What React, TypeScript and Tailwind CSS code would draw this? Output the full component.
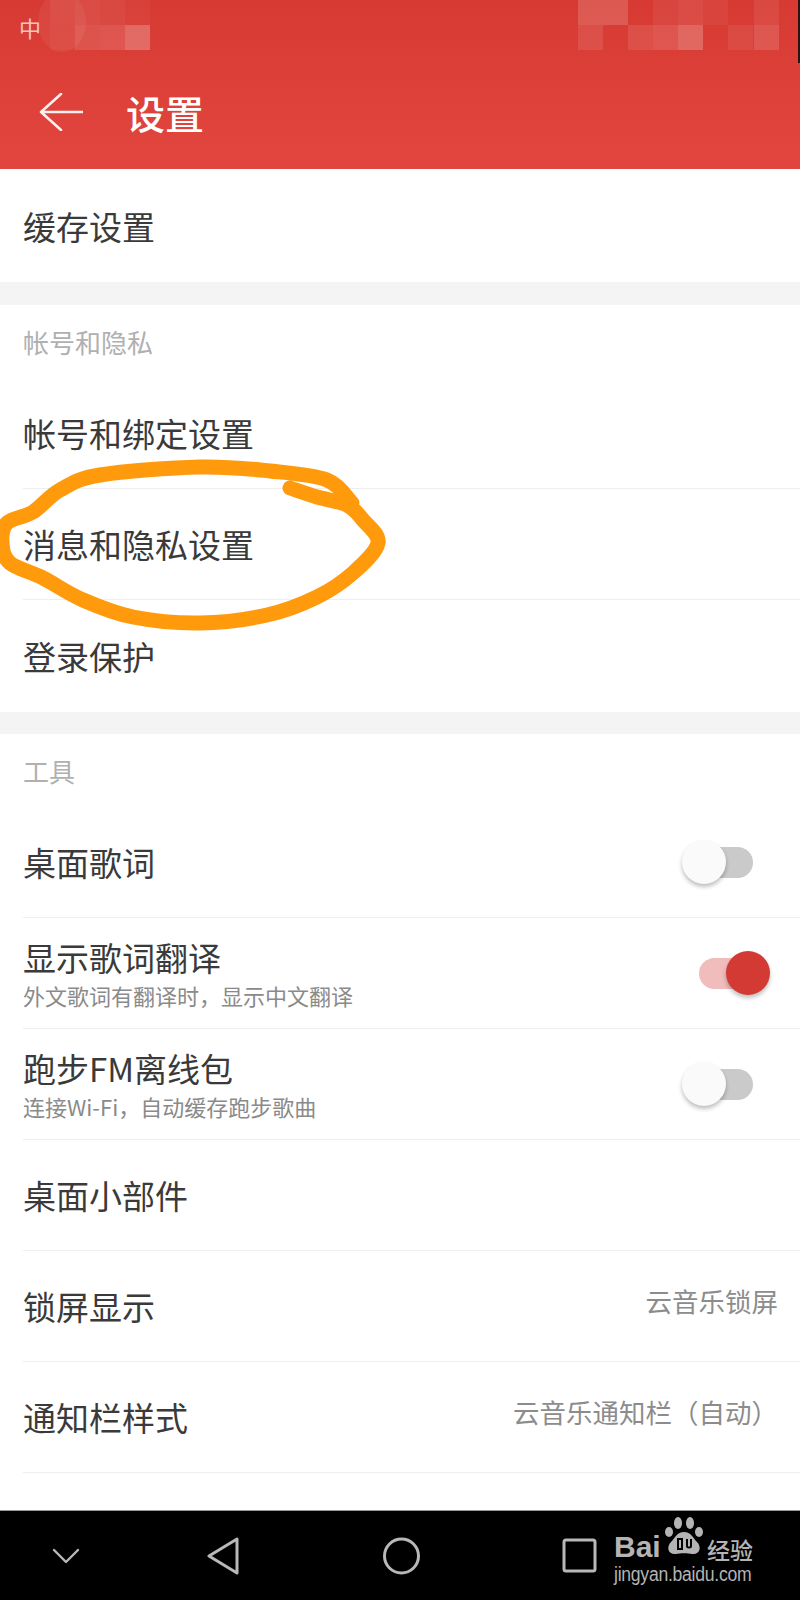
const font = "font-['Noto_Sans_CJK_SC','Noto_Sans',sans-serif]";

const mosaicLeft = [
  [50, 0, 0.05], [75, 0, 0.09], [100, 0, 0.07], [125, 0, 0.04],
  [50, 25, 0.04], [75, 25, 0.12], [100, 25, 0.13], [125, 25, 0.24],
];
const mosaicRight = [
  [578, 0, 0.16], [603, 0, 0.16], [653, 0, 0.06], [678, 0, 0.09], [703, 0, 0.05], [754, 0, 0.08],
  [578, 25, 0.1], [628, 25, 0.1], [653, 25, 0.13], [678, 25, 0.22], [728, 25, 0.07], [754, 25, 0.14],
];

// hand-drawn orange ring, traced from the screenshot
const ring = [
  [290, 488], [317, 497], [347, 505], [363, 520], [378, 543], [353, 573], [317, 597], [267, 615],
  [200, 623], [133, 617], [83, 600], [43, 578], [10, 563], [2, 543], [7, 523], [33, 512],
  [60, 490], [100, 475], [200, 467], [270, 471], [327, 480], [352, 503],
];

function smoothPath(pts: number[][]) {
  let d = `M${pts[0][0]} ${pts[0][1]}`;
  for (let i = 0; i < pts.length - 1; i++) {
    const p0 = pts[Math.max(i - 1, 0)];
    const p1 = pts[i];
    const p2 = pts[i + 1];
    const p3 = pts[Math.min(i + 2, pts.length - 1)];
    d += ` C${p1[0] + (p2[0] - p0[0]) / 6} ${p1[1] + (p2[1] - p0[1]) / 6} ${p2[0] - (p3[0] - p1[0]) / 6} ${p2[1] - (p3[1] - p1[1]) / 6} ${p2[0]} ${p2[1]}`;
  }
  return d;
}

function Toggle({ on }: { on?: boolean }) {
  return (
    <div className="relative w-[88px] h-[44px] shrink-0">
      <div className={`absolute left-[17px] top-[7px] w-[54px] h-[31px] rounded-full ${on ? "bg-[#f0bcbc]" : "bg-[#cacaca]"}`} />
      <div
        className={`absolute top-0 w-[44px] h-[44px] rounded-full shadow-[0_3px_4px_rgba(0,0,0,0.25)] ${
          on ? "left-[44px] bg-[#d23a33]" : "left-0 bg-[#fafafa]"
        }`}
      />
    </div>
  );
}

function Row({
  title,
  sub,
  right,
  toggle,
  last,
  h = "h-[111px]",
}: {
  title: string;
  sub?: string;
  right?: string;
  toggle?: "on" | "off";
  last?: boolean;
  h?: string;
}) {
  return (
    <div className={`ml-[23px] flex items-center justify-between ${h} ${last ? "" : "border-b border-[#eeeeee]"}`}>
      <div className="flex flex-col">
        <div className="text-[33px] leading-[40px] text-[#3a3a3a]">{title}</div>
        {sub && <div className="mt-[4px] text-[22px] leading-[28px] text-[#8a8a8a]">{sub}</div>}
      </div>
      {toggle && <div className="mr-[30px]"><Toggle on={toggle === "on"} /></div>}
      {right && <div className="mr-[22px] mb-[10px] text-[26.5px] text-[#8c8c8c]">{right}</div>}
    </div>
  );
}

function SectionLabel({ text }: { text: string }) {
  return <div className="ml-[23px] h-[72px] flex items-center text-[26px] text-[#b0b0b0]">{text}</div>;
}

export default function App() {
  return (
    <div className={`relative w-[800px] h-[1600px] overflow-hidden bg-white flex flex-col ${font}`}>
      <header className="relative h-[169px] shrink-0 bg-gradient-to-b from-[#d63a32] to-[#e2463e]">
        <svg className="absolute left-0 top-0" width="800" height="64">
          {[...mosaicLeft, ...mosaicRight].map(([x, y, o]) => (
            <rect key={`${x}-${y}`} x={x} y={y} width="25" height="25" fill="white" opacity={o} />
          ))}
          <ellipse cx="62" cy="22" rx="24" ry="30" fill="white" opacity="0.06" />
          <rect x="798" y="0" width="2" height="63" fill="#2a1412" />
        </svg>
        <div className="absolute left-[19px] top-[12px] text-[22px] leading-[30px] text-[#f6c4c0]">中</div>
        <div className="absolute left-[39px] top-[92px] flex items-center">
          <svg width="44" height="38" viewBox="0 0 44 38" fill="none" stroke="#fdf0ee" strokeWidth="2.6" strokeLinecap="round" strokeLinejoin="round">
            <path d="M22 1 L2 19 L22 37 M2 19 H44" />
          </svg>
          <div className="ml-[43px] text-[39px] leading-[40px] font-medium text-white">设置</div>
        </div>
      </header>

      <Row title="缓存设置" last h="h-[113px]" />
      <div className="h-[23px] shrink-0 bg-[#f4f4f4]" />

      <SectionLabel text="帐号和隐私" />
      <Row title="帐号和绑定设置" h="h-[112px]" />
      <Row title="消息和隐私设置" />
      <Row title="登录保护" last h="h-[112px]" />
      <div className="h-[22px] shrink-0 bg-[#f4f4f4]" />

      <SectionLabel text="工具" />
      <Row title="桌面歌词" toggle="off" h="h-[112px]" />
      <Row title="显示歌词翻译" sub="外文歌词有翻译时，显示中文翻译" toggle="on" />
      <Row title="跑步FM离线包" sub="连接Wi-Fi，自动缓存跑步歌曲" toggle="off" />
      <Row title="桌面小部件" />
      <Row title="锁屏显示" right="云音乐锁屏" />
      <Row title="通知栏样式" right="云音乐通知栏（自动）" />
      <div className="flex-1" />

      <nav className="relative h-[90px] shrink-0 bg-black border-t border-[#9a9a9a] flex items-center">
        <svg className="ml-[52px]" width="28" height="16" viewBox="0 0 28 16" fill="none" stroke="#b8b8b8" strokeWidth="2.4" strokeLinecap="round" strokeLinejoin="round">
          <path d="M2 2 L14 14 L26 2" />
        </svg>
        <svg className="ml-[127px]" width="32" height="38" viewBox="0 0 32 38" fill="none" stroke="#b8b8b8" strokeWidth="3" strokeLinejoin="round">
          <path d="M30 2 V36 L2 19 Z" />
        </svg>
        <svg className="ml-[144px]" width="37" height="38" viewBox="0 0 37 38" fill="none" stroke="#b8b8b8" strokeWidth="3">
          <circle cx="18.5" cy="19" r="17" />
        </svg>
        <svg className="ml-[142px]" width="35" height="35" viewBox="0 0 35 35" fill="none" stroke="#b8b8b8" strokeWidth="3" strokeLinejoin="round">
          <rect x="2" y="2" width="31" height="31" rx="2" />
        </svg>
        <div className="absolute left-[614px] top-[4px] w-[145px] h-[70px] text-[#b4b4b4]">
          <div className="absolute left-0 top-[20px] text-[30px] leading-[24px] font-bold font-['Liberation_Sans',sans-serif]">Bai</div>
          <svg className="absolute left-[49px] top-0" width="44" height="44" viewBox="0 0 44 44" fill="#b4b4b4">
            <ellipse cx="15" cy="8" rx="4" ry="6" />
            <ellipse cx="27" cy="8" rx="4" ry="6" />
            <ellipse cx="6" cy="17" rx="4" ry="5" />
            <ellipse cx="36" cy="17" rx="4" ry="5" />
            <path d="M21 17 C14 17 12 23 8 27 C3 32 5 40 13 39 C17 38 25 38 29 39 C37 40 39 32 34 27 C30 23 28 17 21 17 Z" />
            <path d="M15 24 V34 H19 V24 Z M24 24 V31 C24 33 28 33 28 31 V24" fill="none" stroke="black" strokeWidth="2" />
          </svg>
          <div className="absolute left-[93px] top-[22px] text-[23px] leading-[24px] font-medium">经验</div>
          <div className="absolute left-0 top-[48px] text-[20px] leading-[22px] tracking-[-0.3px] font-['Liberation_Sans',sans-serif] whitespace-nowrap scale-x-[0.88] origin-left">jingyan.baidu.com</div>
        </div>
      </nav>

      <svg className="absolute left-0 top-[450px] pointer-events-none" width="400" height="190" viewBox="0 450 400 190" fill="none" stroke="#ff9a0d" strokeWidth="15" strokeLinecap="round" strokeLinejoin="round">
        <path d={smoothPath(ring)} />
      </svg>
    </div>
  );
}
